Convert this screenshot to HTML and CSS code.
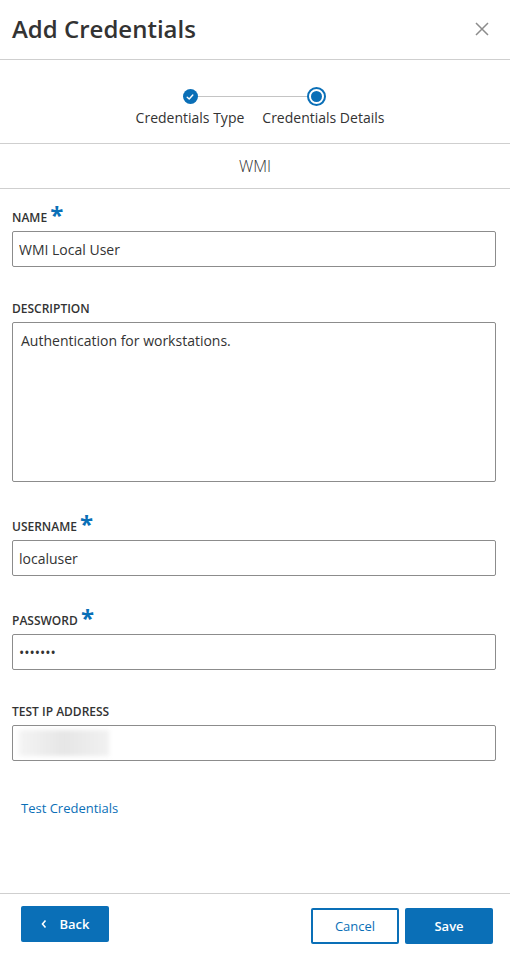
FILE: index.html
```html
<!DOCTYPE html>
<html lang="en">
<head>
<meta charset="utf-8">
<title>Add Credentials</title>
<link rel="stylesheet" href="styles.css">
</head>
<body>
<div class="dialog">
  <header class="head">
    <h1 class="title">Add Credentials</h1>
    <button class="close" aria-label="Close">
      <svg width="14" height="14" viewBox="0 0 14 14"><path d="M1 1L13 13M13 1L1 13" stroke="#8c8c8c" stroke-width="1.5" fill="none"/></svg>
    </button>
  </header>

  <section class="stepper">
    <div class="dots">
      <span class="dot done">
        <svg width="8" height="8" viewBox="0 0 8 8"><path d="M1.2 4.2L3.2 6L6.8 2" stroke="#fff" stroke-width="1.4" fill="none" stroke-linecap="round" stroke-linejoin="round"/></svg>
      </span>
      <span class="connector"></span>
      <span class="dot current"><span class="inner"></span></span>
    </div>
    <div class="step-labels">
      <span>Credentials Type</span>
      <span>Credentials Details</span>
    </div>
  </section>

  <div class="type">WMI</div>

  <form class="form">
    <div class="field">
      <label class="label req">NAME <span class="star">*</span></label>
      <input class="input" type="text" value="WMI Local User">
    </div>
    <div class="field">
      <label class="label">DESCRIPTION</label>
      <textarea class="input area">Authentication for workstations.</textarea>
    </div>
    <div class="field">
      <label class="label req">USERNAME <span class="star">*</span></label>
      <input class="input" type="text" value="localuser">
    </div>
    <div class="field">
      <label class="label req">PASSWORD <span class="star">*</span></label>
      <input class="input" type="password" value="1234567">
    </div>
    <div class="field">
      <label class="label">TEST IP ADDRESS</label>
      <div class="input ip"><span class="blur"></span></div>
    </div>
    <a class="test-link" href="#">Test Credentials</a>
  </form>

  <footer class="foot">
    <button class="btn primary back" type="button">
      <svg width="8" height="10" viewBox="0 0 8 10"><path d="M5.5 1.5L2.5 5L5.5 8.5" stroke="#fff" stroke-width="1.6" fill="none"/></svg>
      Back
    </button>
    <div class="actions">
      <button class="btn outline" type="button">Cancel</button>
      <button class="btn primary" type="button">Save</button>
    </div>
  </footer>
</div>
</body>
</html>
```

FILE: styles.css
```css
* { box-sizing: border-box; }
html, body { margin: 0; padding: 0; background: #fff; }
body {
  font-family: "Open Sans", "Noto Sans", sans-serif;
  color: #333;
}
.dialog {
  height: 956px;
  display: flex;
  flex-direction: column;
}
.head {
  height: 60px;
  border-bottom: 1px solid #cfcfcf;
  display: flex;
  align-items: center;
  justify-content: space-between;
  padding: 0 21px 0 12px;
}
.title {
  margin: 0 0 2px;
  font-size: 24px;
  font-weight: 600;
  color: #333;
  letter-spacing: 0;
}
.close {
  border: 0;
  background: none;
  padding: 0;
  width: 14px;
  height: 14px;
  display: flex;
  margin-bottom: 2px;
}
.stepper {
  height: 84px;
  border-bottom: 1px solid #cfcfcf;
  padding-top: 27px;
}
.dots {
  display: flex;
  align-items: center;
  justify-content: center;
  padding-right: 2px;
}
.dot {
  border-radius: 50%;
  display: flex;
  align-items: center;
  justify-content: center;
}
.dot.done {
  width: 15px;
  height: 15px;
  background: #0a6fb7;
}
.connector {
  width: 109px;
  height: 1px;
  background: #c4c4c4;
}
.dot.current {
  width: 19px;
  height: 19px;
  border: 2px solid #0a6fb7;
  background: #fff;
}
.dot.current .inner {
  width: 11px;
  height: 11px;
  border-radius: 50%;
  background: #0a6fb7;
}
.step-labels {
  display: flex;
  justify-content: center;
  gap: 18px;
  padding-left: 10px;
  font-size: 14px;
  line-height: 20px;
  margin-top: 2px;
  color: #333;
}
.type {
  height: 45px;
  border-bottom: 1px solid #cfcfcf;
  display: flex;
  align-items: center;
  justify-content: center;
  font-size: 16px;
  font-weight: 300;
  color: #333;
  padding-bottom: 1px;
}
.form {
  flex: 1;
  display: flex;
  flex-direction: column;
  padding: 18px 14px 0 12px;
}
.field {
  display: flex;
  flex-direction: column;
  margin-bottom: 34px;
}
.label {
  font-size: 12px;
  font-weight: 600;
  line-height: 16px;
  margin-bottom: 5px;
  color: #333;
}
.label.req { padding-top: 3px; }
.star {
  color: #0a6fb7;
  font-size: 24px;
  font-weight: 700;
  line-height: 0;
  vertical-align: -2px;
  margin-left: 0;
}
.input {
  display: block;
  width: 100%;
  height: 36px;
  border: 1px solid #8c8c8c;
  border-radius: 2px;
  padding: 0 6px;
  font-family: "Open Sans", "Noto Sans", sans-serif;
  font-size: 14px;
  color: #333;
  background: #fff;
  outline: none;
}
.area {
  height: 160px;
  resize: none;
  padding: 8px 8px;
  line-height: 20px;
}
.ip {
  display: flex;
  align-items: center;
  padding-left: 6px;
}
.blur {
  width: 90px;
  height: 26px;
  background: linear-gradient(90deg, #f4f4f4, #e6e6e6 50%, #f1f1f1);
  filter: blur(2px);
}
.test-link {
  margin-top: 4px;
  margin-left: 9px;
  font-size: 13px;
  color: #0a6fb7;
  text-decoration: none;
}
.foot {
  height: 63px;
  border-top: 1px solid #cfcfcf;
  display: flex;
  align-items: flex-start;
  justify-content: space-between;
  padding: 12px 17px 0 21px;
}
.actions {
  display: flex;
  gap: 6px;
  margin-top: 2px;
}
.btn {
  height: 36px;
  width: 88px;
  border-radius: 2px;
  font-family: "Open Sans", "Noto Sans", sans-serif;
  font-size: 13px;
  font-weight: 600;
  display: flex;
  align-items: center;
  justify-content: center;
  cursor: pointer;
}
.primary {
  background: #0a6fb7;
  border: 0;
  color: #fff;
}
.outline {
  background: #fff;
  border: 2px solid #0a6fb7;
  color: #0a6fb7;
  font-weight: 400;
}
.back { gap: 11px; padding-right: 6px; }
```
